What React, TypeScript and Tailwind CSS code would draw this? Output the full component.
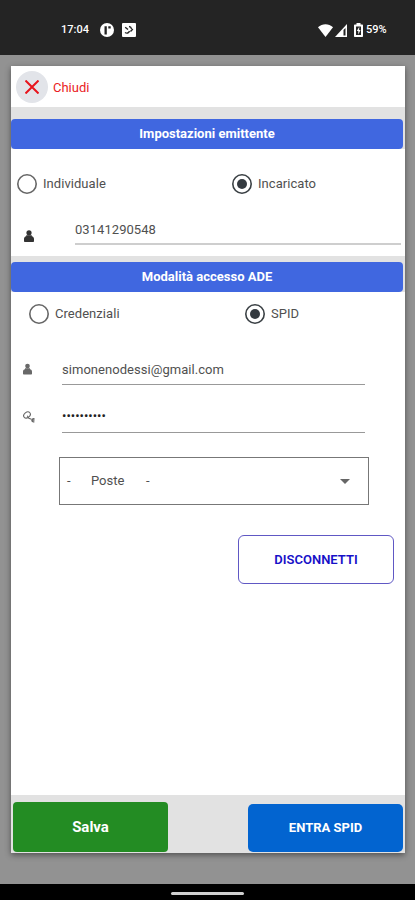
import { clsx } from 'clsx'

function Radio({ label, checked = false, className }: { label: string; checked?: boolean; className?: string }) {
  return (
    <label className={clsx("flex items-center gap-[6px] text-[13px] leading-5", className)}>
      <svg className="size-5 shrink-0" viewBox="0 0 20 20" fill="none">
        <circle cx="10" cy="10" r="9.2" stroke={checked ? "#3a4044" : "#666"} strokeWidth="1.6" />
        {checked && <circle cx="10" cy="10" r="5" fill="#343a40" />}
      </svg>
      <span className="pt-px tracking-[0.05px]">{label}</span>
    </label>
  )
}

function PersonIcon({ className }: { className?: string }) {
  return (
    <svg className={className} viewBox="0 0 10 12" fill="currentColor">
      <circle cx="5" cy="2.8" r="2.6" />
      <path d="M2.2 5.2h5.6v1.1C9.2 6.6 10 7.5 10 9v2.2c0 .5-.3.8-.8.8H.8c-.5 0-.8-.3-.8-.8V9c0-1.5.8-2.400 2.200-2.700z" />
    </svg>
  )
}

function KeyIcon() {
  return (
    <svg className="h-3 w-3 text-[#666]" viewBox="0 0 12 12" fill="none" stroke="currentColor" strokeWidth="1.1">
      <ellipse cx="4" cy="4" rx="3.6" ry="2.7" transform="rotate(-38 4 4)" />
      <path d="M4.3 4.8 5.8 7.2 8.5 8.2" />
      <path d="M11.5 7.8C9.8 7.3 8.7 8.3 8.9 9.500c.3 1.300 1.500 1.700 2.400.9M9 9.200h2.500" strokeWidth="1.3" />
    </svg>
  )
}

function StatusBar() {
  return (
    <div className="flex h-[55px] items-center bg-[#242424] pt-[5px] pl-[61px] pr-[27px] text-white">
      <span className="w-[28px] text-[11px] font-medium">17:04</span>
      <svg className="ml-[11px] size-[14px]" viewBox="0 0 14 14">
        <circle cx="7" cy="7" r="7" fill="#fff" />
        <path d="M4.5 3.2h2.3v8.3H4.500zM8.300 3.200h2.400v2.400H8.300z" fill="#242424" />
      </svg>
      <svg className="ml-2 size-[14px]" viewBox="0 0 14 14">
        <rect width="14" height="14" rx="1" fill="#fff" />
        <path d="M3.2 4.2 6 6.5M3 9.5c2 1.3 3.8.6 4.5-1.5M7 3.5c1.5.2 2.3 1 2.5 2.500M10.800 6 8.500 8.500" fill="none" stroke="#242424" strokeWidth="1.4" />
      </svg>
      <svg className="ml-auto h-[13px] w-[15px]" viewBox="0 0 15 13" fill="#fff">
        <path d="M0 3.2C4.3-.8 10.7-.8 15 3.2L7.5 13z" />
      </svg>
      <svg className="ml-[2px] h-[13px] w-[12px]" viewBox="0 0 12 13">
        <path d="M0 13 12 0v13z" fill="#fff" />
        <path d="M8.5 6v5.5h2V4z" fill="#242424" />
      </svg>
      <svg className="ml-[7px] h-[14px] w-[9px]" viewBox="0 0 9 14">
        <path d="M2.5 0h4v1.5H8c.6 0 1 .4 1 1V13c0 .6-.4 1-1 1H1c-.6 0-1-.4-1-1V2.5c0-.6.4-1 1-1h1.5z" fill="#fff" />
        <path d="M2 3.5h5v8.5H2z" fill="#242424" />
        <path d="M5.3 3.8 2.8 8h1.5v3.5L6.5 7H5.1z" fill="#fff" />
      </svg>
      <span className="ml-[3px] w-[22px] text-[11px] font-medium">59%</span>
    </div>
  )
}

function SectionTitle({ children }: { children: string }) {
  return (
    <h2 className="mr-[2px] flex h-[30px] items-center justify-center rounded-[4px] bg-[#4067e0] text-[13px] font-bold text-white">
      {children}
    </h2>
  )
}

export default function App() {
  return (
    <div className="flex h-[900px] w-[415px] flex-col bg-[#929292] font-['Roboto',sans-serif] text-[#505050]">
      <StatusBar />

      <main className="mt-[11px] mr-[10px] ml-[11px] flex h-[787px] flex-col bg-white shadow-[0_2px_6px_rgba(0,0,0,0.45)]">
        <header className="flex h-[41px] items-center pt-px pl-[5px]">
          <button className="flex size-8 items-center justify-center rounded-full bg-[#e2e4e9]">
            <svg className="size-[14px]" viewBox="0 0 14 14" stroke="#e8141c" strokeWidth="2">
              <path d="M.5.5l13 13M13.5.5l-13 13" />
            </svg>
          </button>
          <span className="ml-[5px] pt-px text-[13px] text-[#ea1c24]">Chiudi</span>
        </header>

        <section>
          <div className="bg-[#e2e2e2] pt-[12px]">
            <SectionTitle>Impostazioni emittente</SectionTitle>
          </div>
          <div className="flex h-[45px] items-end pl-[6px]">
            <Radio label="Individuale" className="w-[215px]" />
            <Radio label="Incaricato" checked />
          </div>
          <div className="mt-[21px] mb-[11px] flex h-[30px] items-end pr-1 pl-[13px]">
            <PersonIcon className="mb-[3px] h-3 w-[10px] text-[#333]" />
            <div className="ml-[41px] h-full flex-1 border-b-2 border-[#cecece] pt-[5px] text-[13px] leading-5 tracking-[0.05px]">
              03141290548
            </div>
          </div>
        </section>

        <section>
          <div className="bg-[#e2e2e2] pt-[6px]">
            <SectionTitle>Modalità accesso ADE</SectionTitle>
          </div>
          <div className="flex h-[32px] items-end pl-[18px]">
            <Radio label="Credenziali" className="w-[216px]" />
            <Radio label="SPID" checked />
          </div>

          <div className="mt-[30px] flex h-[31px] pl-3">
            <PersonIcon className="mt-[9px] h-3 w-[9px] text-[#686868]" />
            <div className="ml-[30px] w-[303px] border-b border-[#999] pt-[6px] text-[13px] leading-5 tracking-[0.04px]">
              simonenodessi@gmail.com
            </div>
          </div>
          <div className="mt-4 flex h-8 pl-3">
            <div className="mt-[10px]">
              <KeyIcon />
            </div>
            <div className="ml-[27px] w-[303px] border-b border-[#999] pt-[5px] text-[13px] leading-5 text-[#222]">
              ••••••••••
            </div>
          </div>

          <div className="mt-6 ml-[48px] flex h-[48px] w-[310px] items-center border border-[#777] pl-[7px] text-[13px]">
            <span className="w-[24px]">-</span>
            <span className="w-[55px]">Poste</span>
            <span>-</span>
            <svg className="mr-[18px] ml-auto h-[5px] w-[10px]" viewBox="0 0 10 5" fill="#666">
              <path d="M0 0h10L5 5z" />
            </svg>
          </div>

          <button className="mt-[30px] ml-[227px] flex h-[49px] w-[156px] items-center justify-center rounded-[6px] border border-[#6058c4] text-[13px] font-semibold text-[#1710c8]">
            DISCONNETTI
          </button>
        </section>

        <footer className="mt-auto flex h-[58px] items-end justify-between bg-[#e2e2e2] px-[2px] pb-[1px] text-white">
          <button className="h-[50px] w-[155px] rounded-[4px] bg-[#238c23] text-[15px] font-bold">Salva</button>
          <button className="h-[48px] w-[155px] rounded-[5px] bg-[#0264d0] text-[13px] font-bold">ENTRA SPID</button>
        </footer>
      </main>

      <div className="mt-auto flex h-4 items-center justify-center bg-black pt-[2px]">
        <div className="h-[3px] w-[73px] rounded-full bg-[#d0d0d0]" />
      </div>
    </div>
  )
}
